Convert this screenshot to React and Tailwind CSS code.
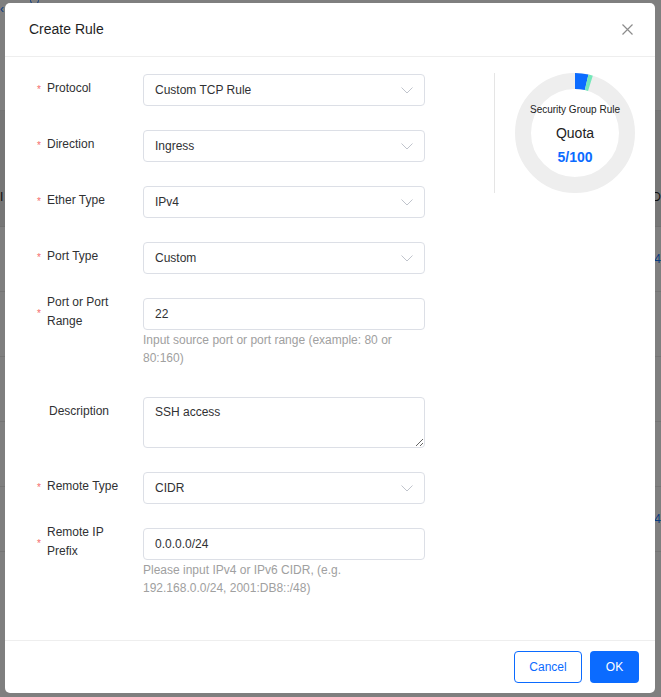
import React from "react";

const font = { fontFamily: '"Liberation Sans", Arial, sans-serif' };

// -------------------------------------------------------------------------
// Small pieces
// -------------------------------------------------------------------------
const Chevron = () => (
	<svg width="12" height="7" viewBox="0 0 12 7" className="shrink-0">
		<polyline points="0.5,0.5 6,6 11.5,0.5" fill="none" stroke="#c0c4cc" strokeWidth="1" />
	</svg>
);

const Label = ({ required = true, children, className = "" }) => (
	<div className={`flex items-center h-8 w-[106px] shrink-0 ${className}`}>
		{required ? (
			<span className="w-[10px] text-[10px] leading-none text-[#f56c6c]">*</span>
		) : (
			<span className="w-[12px]"></span>
		)}
		<span className="w-[80px] text-[12px] leading-[19px] text-[#303133] -translate-y-[2px]">{children}</span>
	</div>
);

const Select = ({ value }) => (
	<div className="flex items-center justify-between w-[282px] h-8 pl-[11px] pr-[11px] border border-[#dcdfe6] rounded-[4px] bg-white text-[12px] text-[#303133]">
		<span>{value}</span>
		<Chevron />
	</div>
);

const Input = ({ value }) => (
	<div className="flex items-center w-[282px] h-8 pl-[11px] border border-[#dcdfe6] rounded-[4px] bg-white text-[12px] text-[#303133]">
		{value}
	</div>
);

const Help = ({ children }) => (
	<p className="mt-[1px] w-[282px] text-[12px] leading-[18px] text-[#a0a0a0]">{children}</p>
);

// -------------------------------------------------------------------------
// Quota ring
// -------------------------------------------------------------------------
const QuotaRing = () => {
	const r = 52;
	const c = 2 * Math.PI * r;
	return (
		<div className="relative w-[120px] h-[120px]">
			<svg width="120" height="120" viewBox="0 0 120 120" className="-rotate-90">
				<circle cx="60" cy="60" r={r} fill="none" stroke="#eeeeee" strokeWidth="16" />
				<circle cx="60" cy="60" r={r} fill="none" stroke="#0b6bff" strokeWidth="16"
					strokeDasharray={`${c * 0.036} ${c}`} />
				<circle cx="60" cy="60" r={r} fill="none" stroke="#74e8ba" strokeWidth="16"
					strokeDasharray={`0 ${c * 0.036} ${c * 0.012} ${c}`} />
			</svg>
			<div className="absolute inset-0 flex flex-col items-center">
				<span className="mt-[31px] text-[10px] leading-[12px] text-[#222] whitespace-nowrap">Security Group Rule</span>
				<span className="mt-[9px] text-[14px] leading-[17px] text-[#222]">Quota</span>
				<span className="mt-[7px] text-[14px] leading-[17px] font-bold text-[#0b6bff]">5/100</span>
			</div>
		</div>
	);
};

// -------------------------------------------------------------------------
// App
// -------------------------------------------------------------------------
export default function App() {
	return (
		<div className="relative w-[661px] h-[697px] overflow-hidden bg-white" style={font}>
			{/* Page behind the dialog */}
			<div className="absolute inset-0 flex flex-col">
				<div className="h-[111px] border-b border-[#e8e8e8] relative">
					<span className="absolute left-0 top-0 text-[12px] text-[#1677ff]">‹</span>
					<span className="absolute left-[30px] -top-[4px] w-[9px] h-[9px] rounded-full border border-[#1677ff]"></span>
				</div>
				<div className="h-[116px] bg-[#ececec] border-b border-[#e0e0e0] flex items-end justify-between pb-[20px] text-[12px] text-[#222]">
					<span className="ml-0">I</span>
					<span className="mr-0">ID</span>
				</div>
				<div className="h-[65px] border-b border-[#e8e8e8] flex items-center justify-end text-[12px] text-[#1677ff]">-4</div>
				<div className="h-[65px] border-b border-[#e8e8e8]"></div>
				<div className="h-[65px] border-b border-[#e8e8e8]"></div>
				<div className="h-[65px] border-b border-[#e8e8e8]"></div>
				<div className="h-[65px] border-b border-[#e8e8e8] flex items-center justify-end text-[12px] text-[#1677ff]">-4</div>
			</div>
			<div className="absolute inset-0 bg-black/50"></div>

			{/* Dialog */}
			<div className="absolute left-[5px] top-[3px] w-[650px] h-[690px] bg-white rounded-[5px] flex flex-col">
				{/* Header */}
				<div className="h-[54px] shrink-0 flex items-center justify-between pl-[24px] pr-[22px] border-b border-[#eeeeee]">
					<span className="text-[14px] text-[#1f1f1f]">Create Rule</span>
					<svg width="11" height="11" viewBox="0 0 11 11">
						<path d="M0.5 0.5 L10.5 10.5 M10.5 0.5 L0.5 10.5" stroke="#8c8c8c" strokeWidth="1.2" />
					</svg>
				</div>

				{/* Body */}
				<div className="flex-1 flex pt-[17px]">
					<div className="w-[489px] shrink-0 pl-[32px] flex flex-col">
						<div className="flex mb-6">
							<Label>Protocol</Label>
							<Select value="Custom TCP Rule" />
						</div>
						<div className="flex mb-6">
							<Label>Direction</Label>
							<Select value="Ingress" />
						</div>
						<div className="flex mb-6">
							<Label>Ether Type</Label>
							<Select value="IPv4" />
						</div>
						<div className="flex mb-6">
							<Label>Port Type</Label>
							<Select value="Custom" />
						</div>
						<div className="flex mb-[30px]">
							<Label className="h-8">Port or Port Range</Label>
							<div>
								<Input value="22" />
								<Help>Input source port or port range (example: 80 or 80:160)</Help>
							</div>
						</div>
						<div className="flex mb-6">
							<Label required={false}>Description</Label>
							<textarea
								defaultValue="SSH access"
								className="w-[282px] h-[51px] pl-[11px] pt-[5px] border border-[#dcdfe6] rounded-[4px] text-[12px] leading-[18px] text-[#303133] outline-none"
							/>
						</div>
						<div className="flex mb-6">
							<Label>Remote Type</Label>
							<Select value="CIDR" />
						</div>
						<div className="flex">
							<Label>Remote IP Prefix</Label>
							<div>
								<Input value="0.0.0.0/24" />
								<Help>Please input IPv4 or IPv6 CIDR, (e.g. 192.168.0.0/24, 2001:DB8::/48)</Help>
							</div>
						</div>
					</div>

					{/* Quota */}
					<div className="self-start -mt-[1px] border-l border-[#e5e5e5] pl-[20px]">
						<QuotaRing />
					</div>
				</div>

				{/* Footer */}
				<div className="h-[53px] shrink-0 border-t border-[#eeeeee] flex items-center justify-end gap-[8px] pr-[16px]">
					<button className="w-[68px] h-8 rounded-[4px] border border-[#0b6bff] bg-white text-[12px] text-[#0b6bff]">Cancel</button>
					<button className="w-[49px] h-8 rounded-[4px] bg-[#0b6bff] text-[12px] text-white">OK</button>
				</div>
			</div>
		</div>
	);
}
